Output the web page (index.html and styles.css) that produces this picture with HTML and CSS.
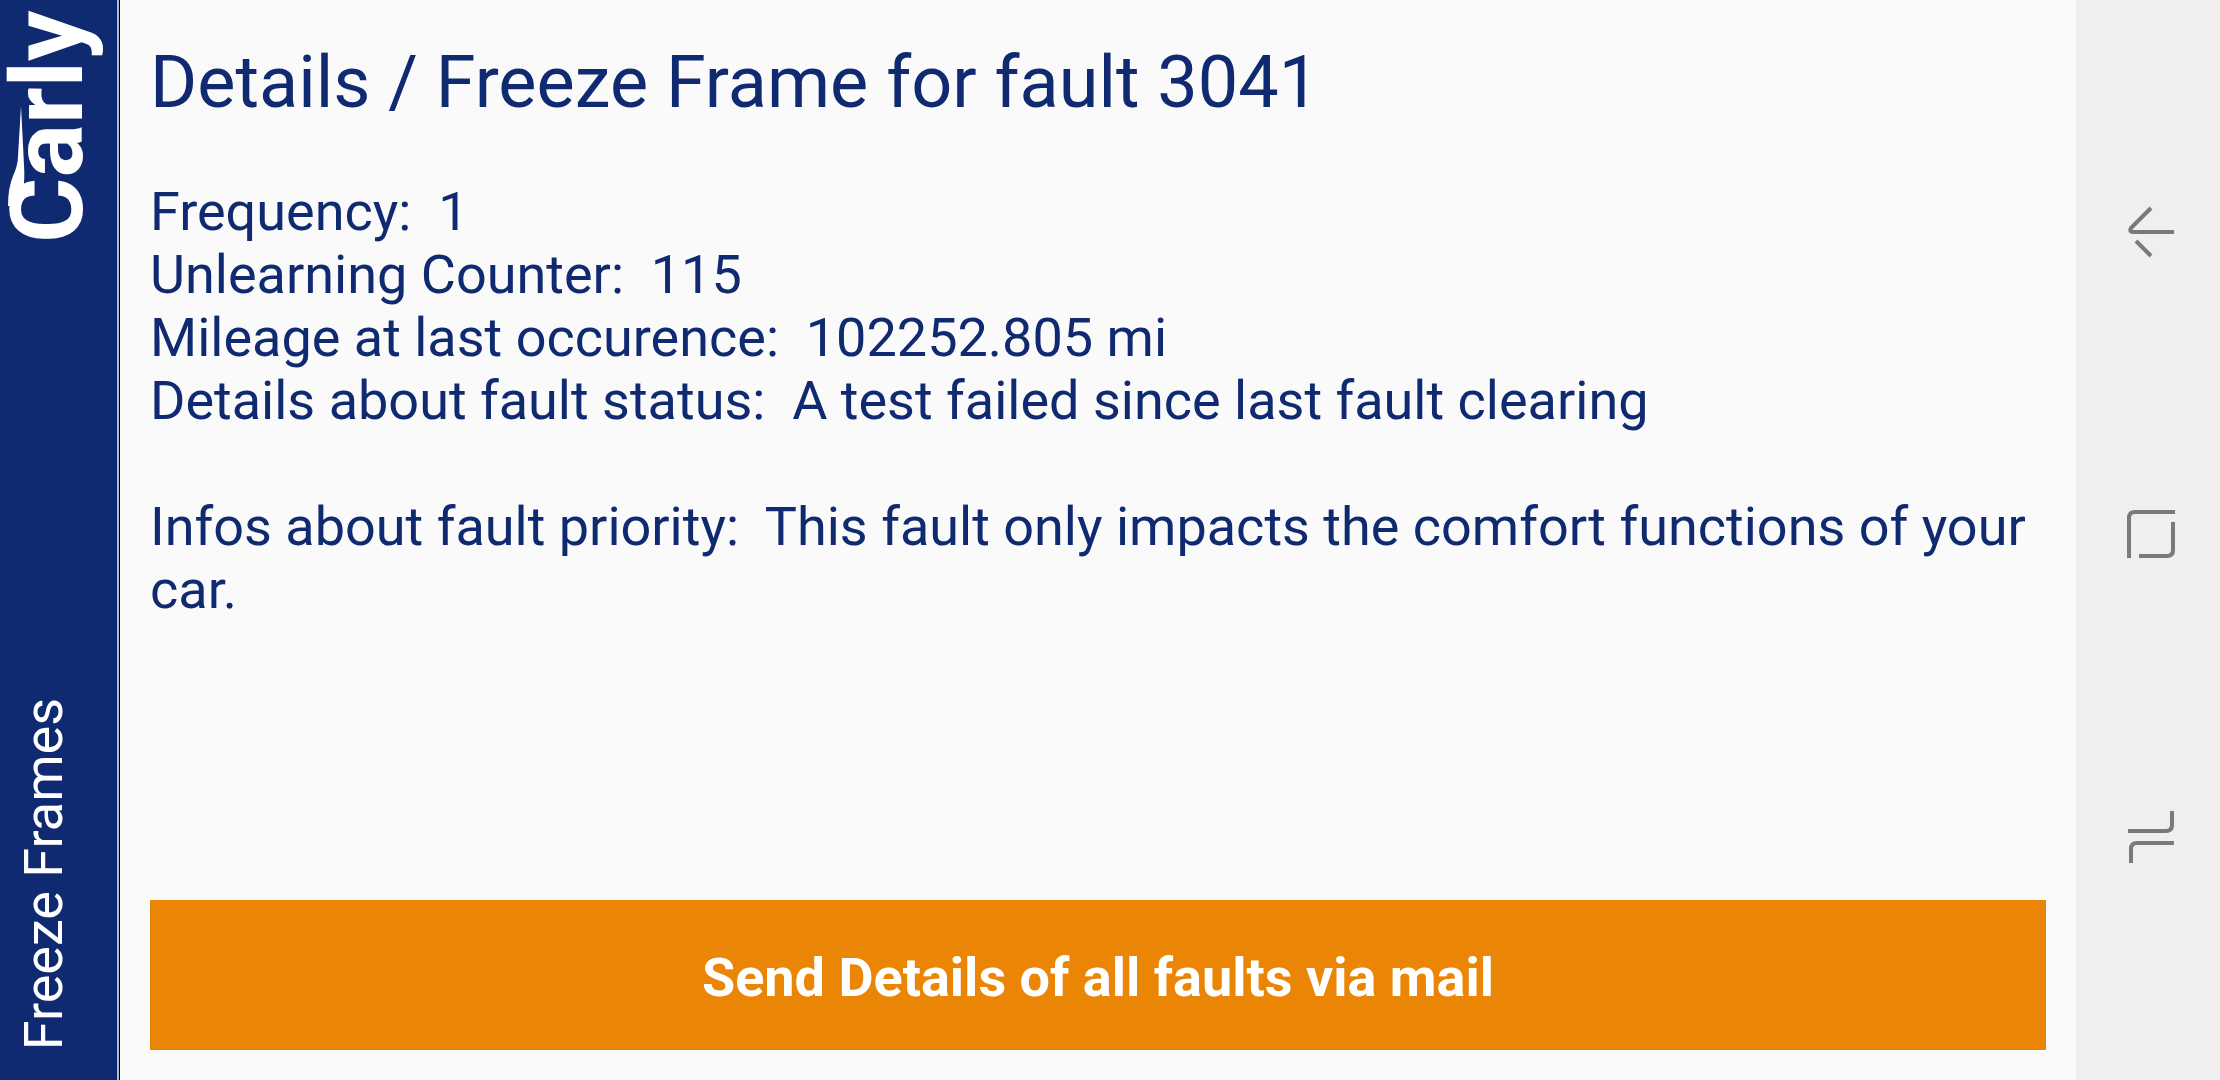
FILE: index.html
```html
<!DOCTYPE html>
<html lang="en">
<head>
  <meta charset="UTF-8">
  <meta name="viewport" content="width=device-width, initial-scale=1.0">
  <title>Carly - Freeze Frames</title>
  <link rel="stylesheet" href="styles.css">
</head>
<body>
  <header class="sidebar">
    <svg class="logo" viewBox="0 0 117 250" role="img" aria-label="Carly">
      <text class="logo-text" transform="rotate(-90)" x="-243" y="82">Carly</text>
      <path class="logo-swash" d="M21 106L18 156Q18 165 13 176Q8 188 8 206L20 206Q20 196 23 190Q25 180 24 165Z"/>
    </svg>
    <div class="screen-name">Freeze Frames</div>
  </header>

  <main>
    <h1>Details / Freeze Frame for fault 3041</h1>
    <div class="details">
      <p>Frequency:&nbsp; 1</p>
      <p>Unlearning Counter:&nbsp; 115</p>
      <p>Mileage at last occurence:&nbsp; 102252.805 mi</p>
      <p>Details about fault status:&nbsp; A test failed since last fault clearing</p>
      <p class="priority">Infos about fault priority:&nbsp; This fault only impacts the comfort functions of your car.</p>
    </div>
    <button class="send">Send Details of all faults via mail</button>
  </main>

  <nav>
    <button aria-label="Back">
      <svg viewBox="0 0 60 60"><path d="M33 6L13 26Q11 30 15 30H56M18 39L33 54"/></svg>
    </button>
    <button aria-label="Home">
      <svg viewBox="0 0 60 60"><path d="M11 53V13Q11 7 17 7H57M55 17V45Q55 51 49 51H21"/></svg>
    </button>
    <button aria-label="Recent apps">
      <svg viewBox="0 0 60 60"><path d="M10 23H48Q54 23 54 17V3M13 55V41Q13 35 19 35H56"/></svg>
    </button>
  </nav>
</body>
</html>
```

FILE: styles.css
```css
* {
  box-sizing: border-box;
}
body {
  margin: 0;
  min-height: 100vh;
  display: flex;
  background: #fafafa;
  color: #0f2a70;
  font-family: Roboto, "Liberation Sans", sans-serif;
  font-size: 54px;
  line-height: 63px;
}

/* Left bar */
.sidebar {
  flex: none;
  width: 120px;
  display: flex;
  flex-direction: column;
  justify-content: space-between;
  background: #0f2a70;
  border-right: 1px solid #000;
  box-shadow: inset -2px 0 #b4bbcf;
  color: #fff;
}
.logo {
  width: 117px;
  height: 250px;
  fill: #fff;
}
.logo-text {
  font-size: 100px;
  font-weight: 700;
}
.screen-name {
  writing-mode: vertical-rl;
  transform: rotate(180deg);
  margin: 0 0 30px 12px;
  align-self: flex-start;
}

/* Fault details */
main {
  flex: 1;
  display: flex;
  flex-direction: column;
  padding: 41px 30px 30px;
}
h1 {
  margin: 0 0 55px;
  font-size: 72px;
  font-weight: 400;
  line-height: 84px;
}
p {
  margin: 0;
}
.priority {
  margin-top: 63px;
}
.send {
  margin-top: auto;
  padding: 46px 30px 41px;
  border: none;
  background: #eb8505;
  color: #fff;
  font: inherit;
  font-weight: 700;
  cursor: pointer;
}

/* Phone navigation */
nav {
  flex: none;
  width: 144px;
  display: flex;
  flex-direction: column;
  padding: 80px 0 90px;
  background: #efefef;
}
nav button {
  flex: 1;
  display: flex;
  align-items: center;
  justify-content: center;
  padding: 0;
  border: none;
  background: none;
  cursor: pointer;
}
nav svg {
  width: 60px;
  height: 60px;
  fill: none;
  stroke: #7a7a7a;
  stroke-width: 4;
}
```
